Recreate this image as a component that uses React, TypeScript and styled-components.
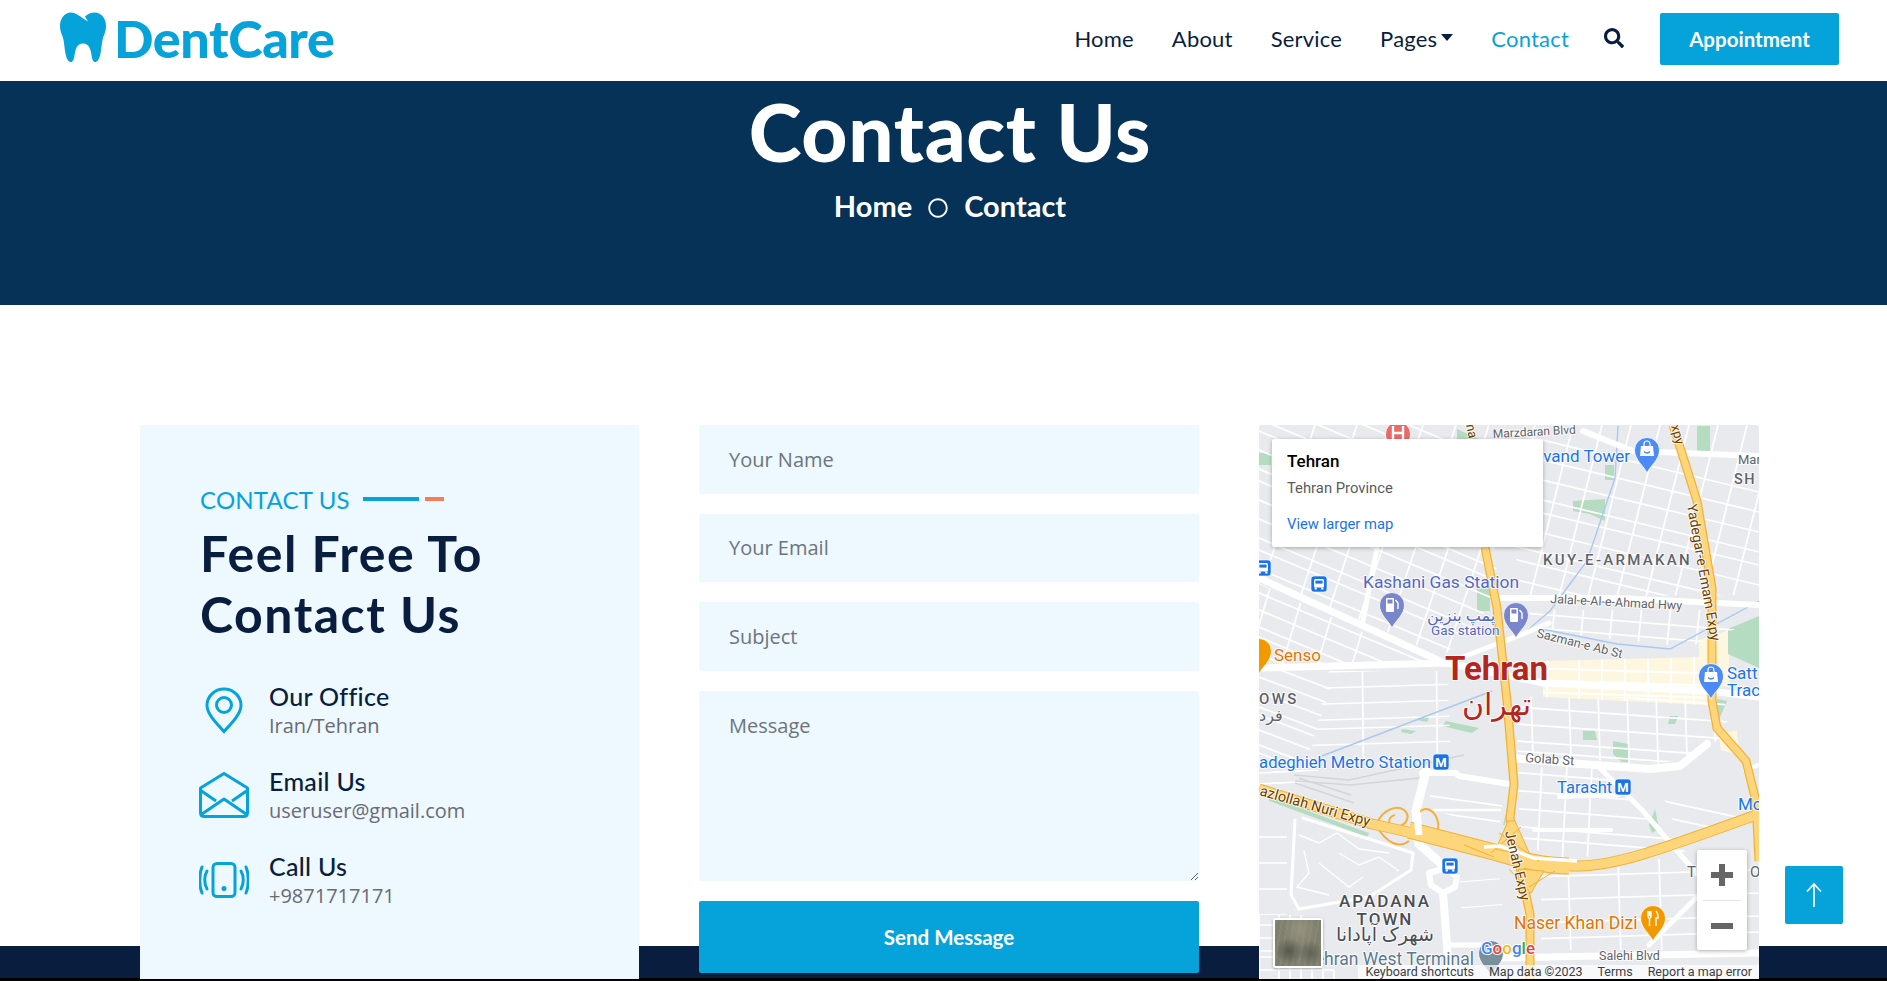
import * as React from 'react'
import styled, {createGlobalStyle} from 'styled-components'
import {FaSearch, FaRegCircle} from 'react-icons/fa'

const Global = createGlobalStyle`
  html, body {
    margin: 0;
    height: 100%;
    overflow: hidden;
    background: #000;
  }
  * { box-sizing: border-box; }
  body { font-family: "Open Sans", "Liberation Sans", sans-serif; }
`

const HEAD_FONT = `Lato, "Liberation Sans", sans-serif`
const MAP_FONT = `Roboto, "DejaVu Sans", sans-serif`
const BLUE = '#06a3da'
const DARK = '#091e3e'

const Page = styled.div`
  height: 978px;
  background: #fff;
`

const Navbar = styled.nav`
  height: 81px;
  display: flex;
  align-items: center;
  justify-content: space-between;
  padding: 0 48px 0 60px;
`

const Brand = styled.a`
  display: flex;
  align-items: center;
  gap: 8px;
  color: ${BLUE};
  font: 900 52px/1 ${HEAD_FONT};
  letter-spacing: -0.4px;
  margin-top: -6px;
`

const NavList = styled.div`
  display: flex;
  align-items: center;
  gap: 38px;
`

const NavLink = styled.a<{$active?: boolean}>`
  color: ${p => (p.$active ? BLUE : DARK)};
  font: 400 22px/1 ${HEAD_FONT};
  letter-spacing: 0.2px;
  margin-top: -4px;
`

const Dropdown = styled(NavLink)`
  display: flex;
  align-items: center;
  &::after {
    content: '';
    margin: -3px 0 0 4px;
    border-top: 7px solid ${DARK};
    border-left: 6px solid transparent;
    border-right: 6px solid transparent;
  }
`

const SearchButton = styled.span`
  display: flex;
  color: ${DARK};
  font-size: 20px;
  margin: -6px 1px 0 -3px;
`

const Appointment = styled.a`
  width: 179px;
  height: 52px;
  margin-left: -3px;
  margin-top: -3px;
  display: flex;
  align-items: center;
  justify-content: center;
  background: ${BLUE};
  border-radius: 2px;
  color: #fff;
  font: 700 20.5px/1 ${HEAD_FONT};
`

const Hero = styled.header`
  height: 224px;
  padding: 2px 0 0 13px;
  background: #063257;
  color: #fff;
  display: flex;
  flex-direction: column;
  align-items: center;
`

const HeroTitle = styled.h1`
  margin: 0;
  font: 900 80px/96px ${HEAD_FONT};
  letter-spacing: 0.7px;
`

const Crumbs = styled.div`
  margin-top: 7px;
  display: flex;
  align-items: center;
  gap: 16px;
  font: 700 29px/40px ${HEAD_FONT};
  svg { font-size: 20px; margin-top: 4px; }
`

const Section = styled.section`
  padding: 120px 128px 0 140px;
  height: 673px;
  background: linear-gradient(to bottom, #fff 641px, ${DARK} 641px);
`

const Columns = styled.div`
  display: grid;
  grid-template-columns: 499px 500px 500px;
  gap: 60px;
  height: 553px;
`

const InfoCard = styled.div`
  background: #edf8ff;
  border-radius: 3px 3px 0 0;
  padding: 60px 0 0 60px;
`

const Eyebrow = styled.div`
  display: flex;
  align-items: center;
  color: ${BLUE};
  font: 400 24px/30px ${HEAD_FONT};
  letter-spacing: 0.2px;
`

const Dash = styled.i<{$w: number; $color: string; $gap: number}>`
  width: ${p => p.$w}px;
  height: 4px;
  margin-left: ${p => p.$gap}px;
  margin-top: -3px;
  background: ${p => p.$color};
`

const Heading = styled.h2`
  margin: 8px 0 0;
  color: ${DARK};
  font: 700 50px/61px ${HEAD_FONT};
  letter-spacing: 1.5px;
`

const Contacts = styled.div`
  margin-top: 35px;
  display: flex;
  flex-direction: column;
  gap: 25px;
`

const ContactRow = styled.div`
  display: flex;
  height: 60px;
`

const IconSlot = styled.div`
  width: 70px;
  margin-left: -1px;
  padding-right: 20px;
  display: flex;
  align-items: center;
  justify-content: center;
  flex: none;
`

const RowTitle = styled.div`
  color: ${DARK};
  font: 500 25px/32px ${HEAD_FONT};
  letter-spacing: 0.3px;
`

const RowText = styled.div`
  color: #6b6a75;
  font-size: 20px;
  line-height: 28px;
`

const Form = styled.form`
  display: flex;
  flex-direction: column;
  gap: 20px;
`

const fieldStyle = `
  width: 100%;
  border: 0;
  border-radius: 2px;
  outline: none;
  background: #edf8ff;
  padding-left: 30px;
  color: #6c757d;
  font: 400 20px "Open Sans", sans-serif;
  &::placeholder { color: #6c757d; opacity: 1; }
`

const Input = styled.input`
  ${fieldStyle}
  height: 68.5px;
`

const Message = styled.textarea`
  ${fieldStyle}
  height: 190.5px;
  padding-top: 21px;
  display: block;
  resize: vertical;
`

const Send = styled.button`
  height: 72px;
  padding-bottom: 2px;
  border: 0;
  border-radius: 2px;
  background: ${BLUE};
  color: #fff;
  font: 700 20.5px ${HEAD_FONT};
`

const MapFrame = styled.div`
  position: relative;
  height: 554px;
  overflow: hidden;
  border-radius: 3px 3px 0 0;
  background: #e8eaed;
  font-family: ${MAP_FONT};
  svg.base { display: block; }
`

const PlaceCard = styled.div`
  position: absolute;
  left: 13px;
  top: 14px;
  width: 271px;
  height: 108px;
  padding: 12px 15px;
  background: #fff;
  border-radius: 2px;
  box-shadow: 0 1px 4px rgba(0, 0, 0, 0.3);
`

const PlaceName = styled.div`
  color: #000;
  font-size: 17px;
  font-weight: 500;
  line-height: 20px;
`

const PlaceRegion = styled.div`
  color: #5b5b5b;
  font-size: 14.8px;
  line-height: 18px;
  margin-top: 8px;
`

const LargerMap = styled.a`
  display: block;
  color: #1a73e8;
  font-size: 14.8px;
  line-height: 18px;
  margin-top: 18px;
`

const ZoomBox = styled.div`
  position: absolute;
  left: 438px;
  top: 425px;
  width: 50px;
  height: 100px;
  background: #fff;
  border-radius: 2px;
  box-shadow: 0 1px 4px rgba(0, 0, 0, 0.3);
  display: flex;
  flex-direction: column;
`

const ZoomKey = styled.div<{$plus?: boolean}>`
  flex: 1;
  position: relative;
  &::before, &::after {
    content: '';
    position: absolute;
    background: #666;
  }
  &::before {
    left: 14px;
    top: 22px;
    width: 22px;
    height: 6px;
  }
  &::after {
    display: ${p => (p.$plus ? 'block' : 'none')};
    left: 22px;
    top: 14px;
    width: 6px;
    height: 22px;
  }
`

const ZoomRule = styled.hr`
  margin: 0 6px;
  border: 0;
  height: 1px;
  background: #e6e6e6;
`

const Thumb = styled.div`
  position: absolute;
  left: 14px;
  top: 493px;
  width: 50px;
  height: 50px;
  border: 2px solid #fff;
  border-radius: 2px;
  box-shadow: 0 1px 3px rgba(0, 0, 0, 0.3);
  background:
    radial-gradient(ellipse at 30% 68%, #54574a 0, transparent 30%),
    radial-gradient(ellipse at 78% 72%, #5f6254 0, transparent 26%),
    radial-gradient(circle at 55% 22%, #96937f 0, transparent 40%),
    repeating-linear-gradient(100deg, rgba(255, 255, 255, 0.06) 0 2px, transparent 2px 6px),
    #7f7f6e;
`

const Attribution = styled.div`
  position: absolute;
  right: 0;
  bottom: 0;
  height: 14px;
  padding: 0 7px 0 7px;
  display: flex;
  gap: 15px;
  background: rgba(255, 255, 255, 0.7);
  color: #3c4043;
  font-size: 12.5px;
  line-height: 14px;
  white-space: nowrap;
`

const BackToTop = styled.a`
  position: fixed;
  left: 1785px;
  top: 866px;
  width: 58px;
  height: 58px;
  background: ${BLUE};
  border-radius: 2px;
  display: flex;
  align-items: center;
  justify-content: center;
`

// street hatch helpers for the map
const across = (from: number, to: number, step: number, slope: number) => {
  let d = ''
  let i = 0
  for (let y = from; y < to; y += step, i++) {
    const o = ((i * 37) % 7) - 3
    d += `M-20 ${y + o - 20 * slope}L520 ${y + o + 520 * slope}`
  }
  return d
}

const down = (from: number, to: number, step: number, slope: number) => {
  let d = ''
  let i = 0
  for (let x = from; x < to; x += step, i++) {
    const o = ((i * 53) % 9) - 4
    d += `M${x + o - 20 * slope} -20L${x + o + 580 * slope} 580`
  }
  return d
}

const blocks: {poly: string; d: string; w?: number}[] = [
  {poly: '0,0 230,0 236,130 240,172 184,232 0,150', d: across(-60, 230, 17, 0.42) + down(60, 380, 34, -0.33)},
  {poly: '0,158 176,241 0,241', d: across(110, 240, 15, 0.42) + down(20, 180, 36, -0.3)},
  {poly: '0,246 78,246 45,340 0,340', d: across(240, 340, 13, 0.38) + down(75, 110, 40, -0.33)},
  {poly: '70,246 188,246 192,330 50,335', d: across(252, 330, 14, -0.03) + down(105, 180, 66, 0.01)},
  {poly: '240,0 500,0 500,170 262,172', d: across(-50, 190, 18, 0.24) + down(280, 560, 30, -0.25)},
  {poly: '262,185 500,185 500,195 430,222 270,205', d: across(170, 230, 12, 0.08) + down(280, 480, 30, -0.1)},
  {poly: '284,236 446,232 448,280 284,272', d: across(238, 280, 10, 0.03) + down(292, 450, 24, 0), w: 2},
  {poly: '258,272 465,272 470,310 420,335 390,340 258,328', d: across(250, 340, 15, 0.07) + down(268, 470, 30, 0.03)},
  {poly: '440,272 465,272 450,320 420,335 395,335', d: across(240, 350, 15, 0.3) + down(420, 480, 18, -0.32)},
  {poly: '258,342 340,342 430,430 300,432 262,420', d: across(330, 440, 16, 0.08) + down(270, 370, 26, -0.05)},
  {poly: '395,348 470,335 495,395 420,412', d: across(290, 410, 14, 0.22) + down(400, 500, 28, -0.3)},
  {poly: '282,445 500,425 500,525 282,525', d: across(440, 530, 21, -0.03) + down(300, 500, 42, 0.03)},
  {poly: '165,352 246,366 240,405 175,385', d: across(350, 400, 14, 0.14) + down(180, 240, 28, -0.2)},
  {poly: '0,345 60,345 50,360 0,362', d: across(340, 360, 9, -0.05)},
  {poly: '0,410 28,410 28,490 0,490', d: across(415, 490, 24, 0)},
  {poly: '0,490 46,490 80,554 0,554', d: across(490, 554, 11, 0) + down(4, 80, 12, 0)},
  {poly: '200,445 240,445 250,545 205,545', d: across(450, 500, 24, -0.08) + down(235, 250, 30, 0.1), w: 1.2},
]

const parks = [
  '314,76 346,74 346,96 331,89 314,86',
  '198,4 220,14 222,28 198,28',
  '469,204 500,191 500,243 469,229',
  '438,1 451,1 451,28 438,28',
  '218,163 231,163 231,186 218,186',
  '346,40 355,40 355,55 346,55',
  '0,28 12,28 12,40 0,40',
  '354,316 369,319 370,337 363,337 354,329',
  '324,306 336,306 338,315 324,315',
  '411,291 419,291 416,299 409,299',
  '458,274 468,276 458,299',
  '187,296 220,303 213,308 183,301',
  '160,291 170,293 168,297 158,295',
  '143,304 157,306 152,309 142,307',
  '244,400 250,376 246,400',
  '390,400 396,384 400,404 393,408',
  '10,372 110,408 108,412 10,376',
]

const MAIN_EXPY = 'M414 0 438 76 453 163 453 276 458 303 487 336 497 376 500 436'
const JENAH_EXPY = 'M226 122 238 183 248 276 255 359 251 393 259 433 271 489 271 560'
const NURI_EXPY = 'M0 364 113 399 235 426C262 434 290 442 320 441 360 440 400 425 500 389'
const INTERCHANGE = 'M150 405 235 427C262 435 285 441 310 441'

type PinProps = {x: number; y: number; color: string; children?: React.ReactNode}

// map pin: (x,y) is the centre of the head
const Pin = ({x, y, color, children}: PinProps) => (
  <g transform={`translate(${x} ${y})`}>
    <path
      d="M0 23C-3 16-12.5 10-12.5 0a12.5 12.5 0 0 1 25 0C12.5 10 3 16 0 23Z"
      fill={color}
      stroke="#fff"
      strokeWidth="0.8"
    />
    {children}
  </g>
)

const ShopGlyph = () => (
  <g fill="#fff">
    <path d="M-6-4H6L7 6H-7Z" />
    <path d="M-3-4V-6a3 3 0 0 1 6 0V-4" fill="none" stroke="#fff" strokeWidth="1.2" />
    <path d="M-3 1.5Q0 4.5 3 1.5" fill="none" stroke="#4285f4" strokeWidth="1.3" />
  </g>
)

const GasGlyph = () => (
  <g fill="#fff">
    <rect x="-6" y="-7" width="8" height="14" rx="1" />
    <rect x="-4.5" y="-5.5" width="5" height="4" fill="#7986cb" />
    <path d="M3.5-5 6-2V4" fill="none" stroke="#fff" strokeWidth="1.4" />
  </g>
)

const Stop = ({x, y, label}: {x: number; y: number; label: 'M' | 'bus'}) => (
  <g transform={`translate(${x} ${y})`}>
    <rect x="-8" y="-8" width="16" height="16" rx="3" fill="#1a73e8" stroke="#fff" strokeWidth="0.6" />
    {label === 'M' ? (
      <text textAnchor="middle" y="4.6" fontSize="13" fontWeight="700" fill="#fff">M</text>
    ) : (
      <g fill="#fff">
        <rect x="-5" y="-5" width="10" height="8.5" rx="1.5" />
        <rect x="-3.6" y="-3.4" width="7.2" height="3" fill="#1a73e8" />
        <rect x="-4.4" y="3.5" width="2.2" height="2" />
        <rect x="2.2" y="3.5" width="2.2" height="2" />
      </g>
    )}
  </g>
)

const Label = styled.text<{$size: number; $color: string; $weight?: number; $track?: number}>`
  font-size: ${p => p.$size}px;
  fill: ${p => p.$color};
  font-weight: ${p => p.$weight ?? 400};
  letter-spacing: ${p => p.$track ?? 0}px;
  paint-order: stroke;
  stroke: rgba(255, 255, 255, 0.85);
  stroke-width: 2px;
  stroke-linejoin: round;
`

const MapDrawing = () => (
  <svg className="base" width="500" height="554" viewBox="0 0 500 554">
    <defs>
      {blocks.map((b, i) => (
        <clipPath id={`b${i}`} key={i}>
          <polygon points={b.poly} />
        </clipPath>
      ))}
    </defs>
    <rect width="500" height="554" fill="#e8eaed" />
    <polygon points="284,236 446,232 448,280 284,272" fill="#fef7e0" />
    <polygon points="440,215 470,205 470,262 440,258" fill="#fef7e0" />
    <polygon points="460,310 478,305 480,330 462,325" fill="#fef7e0" />
    {parks.map(p => (
      <polygon key={p} points={p} fill="#b5dcc0" />
    ))}
    {blocks.map((b, i) => (
      <path key={i} d={b.d} clipPath={`url(#b${i})`} fill="none" stroke="#fff" strokeWidth={b.w ?? 1.7} />
    ))}

    {/* water */}
    <g fill="none" stroke="#aac8f2" strokeWidth="1.4">
      <path d="M359 1 356 53 328 136 291 186 264 209" />
      <path d="M278 203 358 219 411 224 500 176" />
      <path d="M63 331 233 266" />
    </g>

    {/* rail */}
    <g fill="none" stroke="#d3d5d9" strokeWidth="1.5">
      <path d="M35 350 90 355 205 330" />
      <path d="M36 356 92 360 170 352" />
      <path d="M36 358 95 378" />
      <path d="M40 353 92 370" />
    </g>

    {/* streets */}
    <g fill="none" stroke="#fff" strokeLinejoin="round" strokeLinecap="round">
      <path strokeWidth="7" d="M0 243 188 238 284 258 450 266 500 272" />
      <path strokeWidth="7" d="M0 153 181 236" />
      <path strokeWidth="5" d="M118 123 104 196" />
      <path strokeWidth="6" d="M238 173H358L500 180" />
      <path strokeWidth="5" d="M188 238 264 209 290 198" />
      <path strokeWidth="6" d="M324 6 374 26 500 31" />
      <path strokeWidth="8" d="M254 333 308 338 391 344 421 341 448 319" />
      <path strokeWidth="5" d="M341 343 384 386 438 449" />
      <path strokeWidth="6" d="M163 348 197 348 200 351 250 359" />
      <path strokeWidth="9" d="M167 346 157 386 160 419 187 443" />
      <path strokeWidth="6" d="M187 443 198 452 196 462 184 468 172 460 170 448 187 443" />
      <path strokeWidth="8" d="M184 468 188 520 190 554" />
      <path strokeWidth="5" d="M188 520H222" />
      <path strokeWidth="7" d="M241 533 341 531 500 528" />
      <path strokeWidth="3" d="M36 395 32 470 40 484M44 393 154 428 152 445 110 472 40 484" />
      <path strokeWidth="2.5" d="M175 385H241" />
      <path strokeWidth="4" d="M275 405H352" />
      <path strokeWidth="4" d="M300 372 360 370" />
      <path strokeWidth="5" d="M390 520 470 440" />
      <path strokeWidth="4" d="M486 345 500 340" />
    </g>

    {/* winding lanes of the town */}
    <g fill="none" stroke="#fff" strokeWidth="1.4">
      <path d="M40 410 60 418 78 408 100 424 130 428" />
      <path d="M45 426 50 448 38 462 70 470" />
      <path d="M80 428 100 440 120 432 140 446" />
      <path d="M60 438 90 462 104 452" />
    </g>

    {/* highways */}
    <g fill="none" strokeLinejoin="round">
      <g stroke="#f2b134">
        <path strokeWidth="9" d={MAIN_EXPY} />
        <path strokeWidth="9" d={JENAH_EXPY} />
        <path strokeWidth="11" d={NURI_EXPY} />
        <path strokeWidth="17" d={INTERCHANGE} />
        <path strokeWidth="2" d="M118 398C124 384 138 380 145 385 152 391 148 400 138 402 128 402 128 392 136 390" />
        <path strokeWidth="2" d="M176 414C184 398 176 386 168 384 160 384 154 392 158 402" />
        <path strokeWidth="2" d="M118 402C128 418 140 424 150 416" />
      </g>
      <g stroke="#fdd67c">
        <path strokeWidth="6.5" d={MAIN_EXPY} />
        <path strokeWidth="6.5" d={JENAH_EXPY} />
        <path strokeWidth="9" d={NURI_EXPY} />
        <path strokeWidth="15" d={INTERCHANGE} />
      </g>
      <path fill="#fdd67c" stroke="#f2b134" strokeWidth="1" d="M249 396 237 424 272 432 256 396Z" />
      <path fill="#fdd67c" stroke="#f2b134" strokeWidth="1" d="M259 444 285 446 272 468 266 468Z" />
      <g stroke="#f2b134" strokeWidth="1">
        <path d="M205 420 235 432M240 408 280 436M262 402 232 428M250 444 272 468M296 446 270 462" />
      </g>
      <path stroke="#fff" strokeWidth="3.5" d="M225 422 241 421 275 433 318 436" />
      <path stroke="#fff" strokeWidth="7" d="M157 380 160 410" />
    </g>

    <Pin x={139} y={9} color="#ea6b66">
      <path d="M-5-8V5M5-8V5M-5-1H5" fill="none" stroke="#fff" strokeWidth="2.4" />
    </Pin>
    <Pin x={388} y={25} color="#4c8bf5"><ShopGlyph /></Pin>
    <Pin x={452} y={251} color="#4c8bf5"><ShopGlyph /></Pin>
    <Pin x={133} y={180} color="#7986cb"><GasGlyph /></Pin>
    <Pin x={257} y={190} color="#7986cb"><GasGlyph /></Pin>
    <Pin x={0} y={226} color="#f29900" />
    <Pin x={394} y={493} color="#f29900">
      <path d="M-5-7V-2Q-5 0-3.5 .5V8M-3.5-7V-2M-2-7V-2Q-2 0-3.5 .5M3-7Q5-5 5 0H3V8" fill="none" stroke="#fff" strokeWidth="1.4" />
    </Pin>
    <Pin x={232} y={528} color="#78909c" />
    <Stop x={60} y={159} label="bus" />
    <Stop x={4} y={143} label="bus" />
    <Stop x={191} y={441} label="bus" />
    <Stop x={182} y={337} label="M" />
    <Stop x={364} y={362} label="M" />

    <Label x={234} y={13} $size={12} $color="#5f6368" transform="rotate(-3 234 13)">Marzdaran Blvd</Label>
    <Label x={371} y={37} $size={17} $color="#1a73e8" textAnchor="end">Alvand Tower</Label>
    <Label x={479} y={39} $size={13} $color="#5f6368">Mar</Label>
    <Label x={475} y={59} $size={14.5} $color="#5f6368" $weight={500} $track={1.5}>SH</Label>
    <Label x={284} y={140} $size={15} $color="#5f6368" $weight={500} $track={2.3}>KUY-E-ARMAKAN</Label>
    <Label x={428} y={80} $size={14} $color="#6b3d00" transform="rotate(80 428 80)">Yadegar-e Emam Expy</Label>
    <Label x={412} y={1} $size={13} $color="#6b3d00" transform="rotate(75 412 1)">xpy</Label>
    <Label x={207} y={0} $size={13} $color="#6b3d00" transform="rotate(78 207 0)">na</Label>
    <Label x={104} y={163} $size={17.4} $color="#5565c4">Kashani Gas Station</Label>
    <Label x={168} y={196} $size={16} $color="#5565c4">پمپ بنزین</Label>
    <Label x={172} y={210} $size={13.5} $color="#5565c4">Gas station</Label>
    <Label x={15} y={236} $size={17} $color="#e37400">Senso</Label>
    <Label x={291} y={178} $size={12.5} $color="#5f6368" transform="rotate(3 291 178)">Jalal-e-Al-e-Ahmad Hwy</Label>
    <Label x={277} y={212} $size={12.5} $color="#5f6368" transform="rotate(14 277 212)">Sazman-e Ab St</Label>
    <Label x={186} y={255} $size={33} $color="#b3261e" $weight={700}>Tehran</Label>
    <Label x={203} y={290} $size={30} $color="#b3261e">تهران</Label>
    <Label x={0} y={279} $size={15} $color="#5f6368" $weight={500} $track={2.4}>OWS</Label>
    <Label x={0} y={296} $size={16} $color="#5f6368">فرد</Label>
    <Label x={172} y={343} $size={16.6} $color="#1a73e8" textAnchor="end">Sadeghieh Metro Station</Label>
    <Label x={266} y={337} $size={13} $color="#5f6368" transform="rotate(4 266 337)">Golab St</Label>
    <Label x={298} y={368} $size={16.5} $color="#1a73e8">Tarasht</Label>
    <Label x={479} y={385} $size={17} $color="#1a73e8">Mo</Label>
    <Label x={468} y={254} $size={17} $color="#1a73e8">Satt</Label>
    <Label x={468} y={271} $size={17} $color="#1a73e8">Trac</Label>
    <Label x={0} y={370} $size={14.5} $color="#6b3d00" transform="rotate(16 0 370)">azlollah Nuri Expy</Label>
    <Label x={246} y={407} $size={14} $color="#6b3d00" transform="rotate(77 246 407)">Jenah Expy</Label>
    <Label x={126} y={482} $size={17} $color="#4a4d52" $weight={500} $track={2} textAnchor="middle">APADANA</Label>
    <Label x={126} y={500} $size={17} $color="#4a4d52" $weight={500} $track={2} textAnchor="middle">TOWN</Label>
    <Label x={126} y={516} $size={19} $color="#4a4d52" textAnchor="middle">شهرک آپادانا</Label>
    <Label x={215} y={540} $size={17.5} $color="#5a7a8c" textAnchor="end">Tehran West Terminal</Label>
    <Label x={255} y={504} $size={17.5} $color="#e37400">Naser Khan Dizi</Label>
    <Label x={340} y={535} $size={12.5} $color="#5f6368">Salehi Blvd</Label>
    <Label x={428} y={452} $size={15} $color="#5f6368">T</Label>
    <Label x={491} y={452} $size={15} $color="#5f6368">O</Label>

    <text x={222} y={529} fontSize="17" fontWeight="500" stroke="#fff" strokeWidth="2" style={{paintOrder: 'stroke'}}>
      <tspan fill="#4285f4">G</tspan>
      <tspan fill="#ea4335">o</tspan>
      <tspan fill="#fbbc05">o</tspan>
      <tspan fill="#4285f4">g</tspan>
      <tspan fill="#34a853">l</tspan>
      <tspan fill="#ea4335">e</tspan>
    </text>
  </svg>
)

const ToothLogo = () => (
  <svg width="46" height="51" viewBox="0 0 46 51">
    <path
      fill={BLUE}
      d="M11 .5C15 .5 19 3.5 24 7L28 9.5 25 4.5C28 2 31 .5 34.5 .5 42 .5 46 7 46 14 46 20 43.5 23 42.5 28 41 36 41 48 36 50 33 50.5 32 47 31.5 43 30.5 37 29 31.5 23 31.5 17 31.5 15.5 37 14.5 43 14 47 13 50.5 10 50 5 48 5 36 3.5 28 2.5 23 0 20 0 14 0 7 4 .5 11 .5Z"
    />
  </svg>
)

const PinIcon = () => (
  <svg width="38" height="47" viewBox="0 0 38 47" fill="none" stroke={BLUE} strokeWidth="3">
    <path d="M19 2C9.5 2 2 9.5 2 18.5 2 27 12 37 19 44.5 26 37 36 27 36 18.5 36 9.5 28.5 2 19 2Z" />
    <circle cx="19" cy="18" r="7.5" />
  </svg>
)

const MailIcon = () => (
  <svg width="50" height="46" viewBox="0 0 50 46" fill="none" stroke={BLUE} strokeWidth="3" strokeLinejoin="round">
    <path d="M1.5 16 25 1.5 48.5 16V40.5Q48.5 44.5 44.5 44.5H5.5Q1.5 44.5 1.5 40.5Z" />
    <path d="M3 42 25 27 47 42" />
    <path d="M2.5 19 17 29M47.5 19 33 29" />
  </svg>
)

const PhoneIcon = () => (
  <svg width="50" height="36" viewBox="0 0 50 36" fill="none" stroke={BLUE} strokeWidth="3" strokeLinecap="round">
    <rect x="14" y="1.5" width="22" height="33" rx="4" />
    <circle cx="25" cy="26.5" r="2.5" fill={BLUE} stroke="none" />
    <path d="M8 9C5 14 5 22 8 27M42 9C45 14 45 22 42 27" />
    <path d="M3 5C0 12 0 24 3 31M47 5C50 12 50 24 47 31" />
  </svg>
)

const contactRows = [
  {title: 'Our Office', text: 'Iran/Tehran', icon: <PinIcon />},
  {title: 'Email Us', text: 'useruser@gmail.com', icon: <MailIcon />},
  {title: 'Call Us', text: '+9871717171', icon: <PhoneIcon />},
]

const App = () => {
  return (
    <Page>
      <Global />
      <Navbar>
        <Brand>
          <ToothLogo />
          DentCare
        </Brand>
        <NavList>
          <NavLink>Home</NavLink>
          <NavLink>About</NavLink>
          <NavLink>Service</NavLink>
          <Dropdown>Pages</Dropdown>
          <NavLink $active>Contact</NavLink>
          <SearchButton><FaSearch /></SearchButton>
          <Appointment>Appointment</Appointment>
        </NavList>
      </Navbar>

      <Hero>
        <HeroTitle>Contact Us</HeroTitle>
        <Crumbs>
          <span>Home</span>
          <FaRegCircle />
          <span>Contact</span>
        </Crumbs>
      </Hero>

      <Section>
        <Columns>
          <InfoCard>
            <Eyebrow>
              CONTACT US
              <Dash $w={56} $color={BLUE} $gap={13} />
              <Dash $w={19} $color="#f57e57" $gap={6} />
            </Eyebrow>
            <Heading>Feel Free To<br />Contact Us</Heading>
            <Contacts>
              {contactRows.map(row => (
                <ContactRow key={row.title}>
                  <IconSlot>{row.icon}</IconSlot>
                  <div>
                    <RowTitle>{row.title}</RowTitle>
                    <RowText>{row.text}</RowText>
                  </div>
                </ContactRow>
              ))}
            </Contacts>
          </InfoCard>

          <Form>
            <Input placeholder="Your Name" />
            <Input placeholder="Your Email" />
            <Input placeholder="Subject" />
            <Message placeholder="Message" />
            <Send type="button">Send Message</Send>
          </Form>

          <MapFrame>
            <MapDrawing />
            <PlaceCard>
              <PlaceName>Tehran</PlaceName>
              <PlaceRegion>Tehran Province</PlaceRegion>
              <LargerMap>View larger map</LargerMap>
            </PlaceCard>
            <ZoomBox>
              <ZoomKey $plus />
              <ZoomRule />
              <ZoomKey />
            </ZoomBox>
            <Thumb />
            <Attribution>
              <span>Keyboard shortcuts</span>
              <span>Map data ©2023</span>
              <span>Terms</span>
              <span>Report a map error</span>
            </Attribution>
          </MapFrame>
        </Columns>
      </Section>

      <BackToTop>
        <svg width="16" height="26" viewBox="0 0 16 26" fill="none" stroke="#fff" strokeWidth="1.6">
          <path d="M8 25V2M1 9.5 8 2l7 7.5" />
        </svg>
      </BackToTop>
    </Page>
  )
}

export default App
